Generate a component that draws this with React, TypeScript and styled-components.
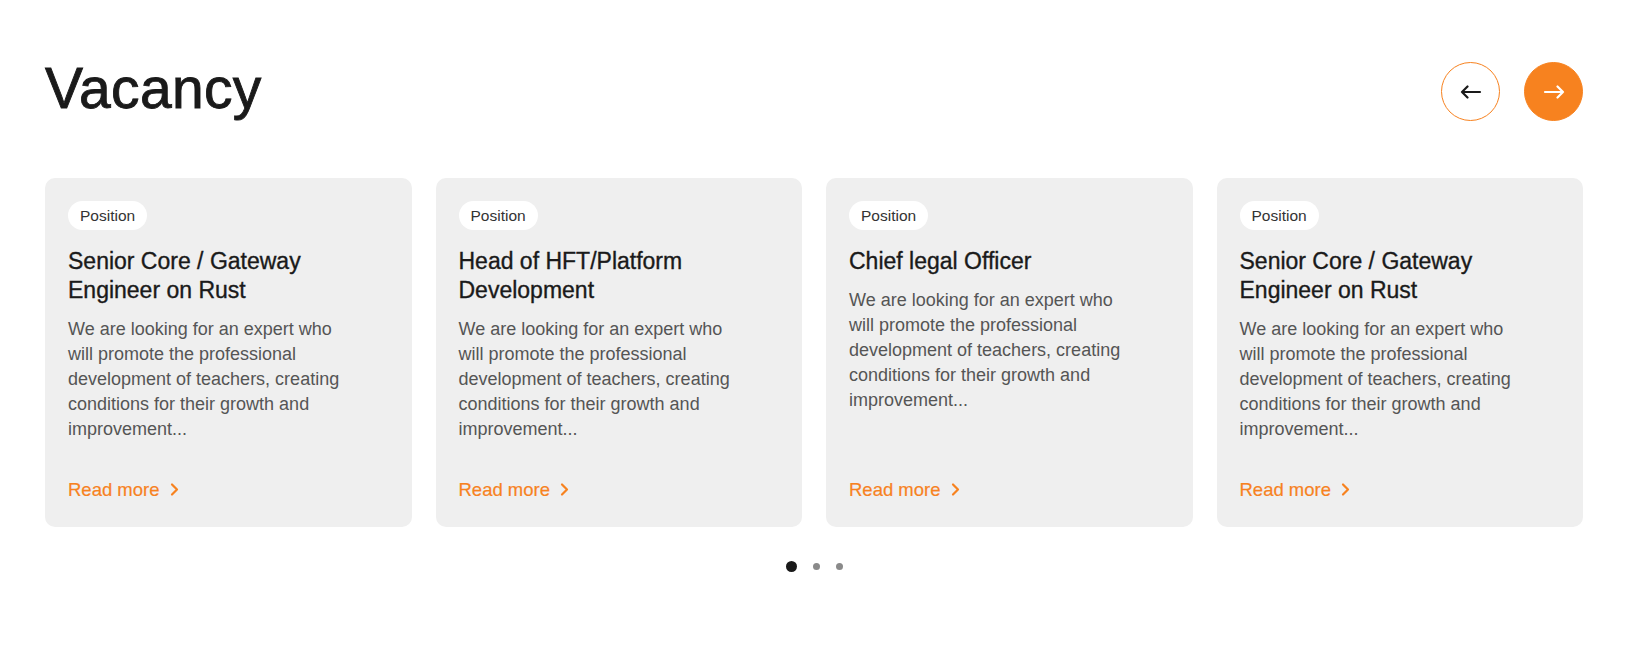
import React from "react";
import styled, { createGlobalStyle } from "styled-components";

const GlobalStyle = createGlobalStyle`
  html, body { margin: 0; padding: 0; background: #ffffff; }
  body { font-family: "Liberation Sans", Arial, Helvetica, sans-serif; color: #1a1a1a; }
  * { box-sizing: border-box; }
`;

const ORANGE = "#F7821F";

const Section = styled.section`
  padding: 60px 45px 0;
  width: 1628px;
  height: 647px;
`;

const Header = styled.div`
  display: flex;
  justify-content: space-between;
  align-items: flex-start;
`;

const Heading = styled.h2`
  margin: 0;
  font-size: 57px;
  line-height: 56px;
  font-weight: 400;
  letter-spacing: 0.3px;
  color: #1a1a1a;
  -webkit-text-stroke: 0.9px #1a1a1a;
`;

const Controls = styled.div`
  display: flex;
  gap: 24px;
  margin-top: 2px;
`;

const NavButton = styled.button<{ $filled?: boolean }>`
  width: 59px;
  height: 59px;
  border-radius: 50%;
  border: 1px solid ${ORANGE};
  background: ${(p) => (p.$filled ? ORANGE : "#ffffff")};
  color: ${(p) => (p.$filled ? "#ffffff" : "#1a1a1a")};
  display: flex;
  align-items: center;
  justify-content: center;
  padding: 0;
  cursor: pointer;
`;

const Cards = styled.div`
  margin-top: 57px;
  display: grid;
  grid-template-columns: repeat(4, 1fr);
  gap: 24px;
`;

const Card = styled.article`
  background: #efefef;
  border-radius: 10px;
  padding: 23px 23px 25px;
  height: 349px;
  display: flex;
  flex-direction: column;
  align-items: flex-start;
`;

const Tag = styled.span`
  display: inline-flex;
  align-items: center;
  height: 29px;
  padding: 0 12px;
  border-radius: 15px;
  background: #ffffff;
  font-size: 15.5px;
  color: #333333;
`;

const Title = styled.h3`
  margin: 17px 0 0;
  font-size: 23px;
  line-height: 29px;
  font-weight: 400;
  color: #1a1a1a;
  -webkit-text-stroke: 0.35px #1a1a1a;
  max-width: 320px;
`;

const Description = styled.p`
  margin: 12px 0 0;
  font-size: 18px;
  line-height: 25px;
  color: #555555;
  max-width: 285px;
`;

const ReadMore = styled.a`
  margin-top: auto;
  display: inline-flex;
  align-items: center;
  gap: 10px;
  font-size: 18.5px;
  line-height: 25px;
  color: ${ORANGE};
  -webkit-text-stroke: 0.2px ${ORANGE};
  text-decoration: none;
  cursor: pointer;
`;

const Dots = styled.div`
  margin-top: 34px;
  display: flex;
  justify-content: center;
  align-items: center;
  gap: 16px;
`;

const Dot = styled.span<{ $active?: boolean }>`
  width: ${(p) => (p.$active ? 11 : 7)}px;
  height: ${(p) => (p.$active ? 11 : 7)}px;
  border-radius: 50%;
  background: ${(p) => (p.$active ? "#1a1a1a" : "#8a8a8a")};
`;

const Arrow = ({ dir }: { dir: "left" | "right" }) => (
  <svg width="22" height="14" viewBox="0 0 22 14" fill="none">
    {dir === "left" ? (
      <path d="M20 7H2M7.5 1.5L2 7l5.5 5.5" stroke="currentColor" strokeWidth="2.2" strokeLinecap="round" strokeLinejoin="round" />
    ) : (
      <path d="M2 7h18M14.5 1.5L20 7l-5.5 5.5" stroke="currentColor" strokeWidth="2.2" strokeLinecap="round" strokeLinejoin="round" />
    )}
  </svg>
);

const Chevron = () => (
  <svg width="9" height="15" viewBox="0 0 9 15" fill="none">
    <path d="M2 2.5l5 5-5 5" stroke={ORANGE} strokeWidth="2.2" strokeLinecap="round" strokeLinejoin="round" />
  </svg>
);

const DESC =
  "We are looking for an expert who will promote the professional development of teachers, creating conditions for their growth and improvement...";

const vacancies = [
  { title: "Senior Core / Gateway Engineer on Rust" },
  { title: "Head of HFT/Platform Development" },
  { title: "Chief legal Officer" },
  { title: "Senior Core / Gateway Engineer on Rust" },
];

export default function App() {
  return (
    <>
      <GlobalStyle />
      <Section>
        <Header>
          <Heading>Vacancy</Heading>
          <Controls>
            <NavButton aria-label="Previous">
              <Arrow dir="left" />
            </NavButton>
            <NavButton $filled aria-label="Next">
              <Arrow dir="right" />
            </NavButton>
          </Controls>
        </Header>
        <Cards>
          {vacancies.map((v, i) => (
            <Card key={i}>
              <Tag>Position</Tag>
              <Title>{v.title}</Title>
              <Description>{DESC}</Description>
              <ReadMore>
                Read more <Chevron />
              </ReadMore>
            </Card>
          ))}
        </Cards>
        <Dots>
          <Dot $active />
          <Dot />
          <Dot />
        </Dots>
      </Section>
    </>
  );
}
